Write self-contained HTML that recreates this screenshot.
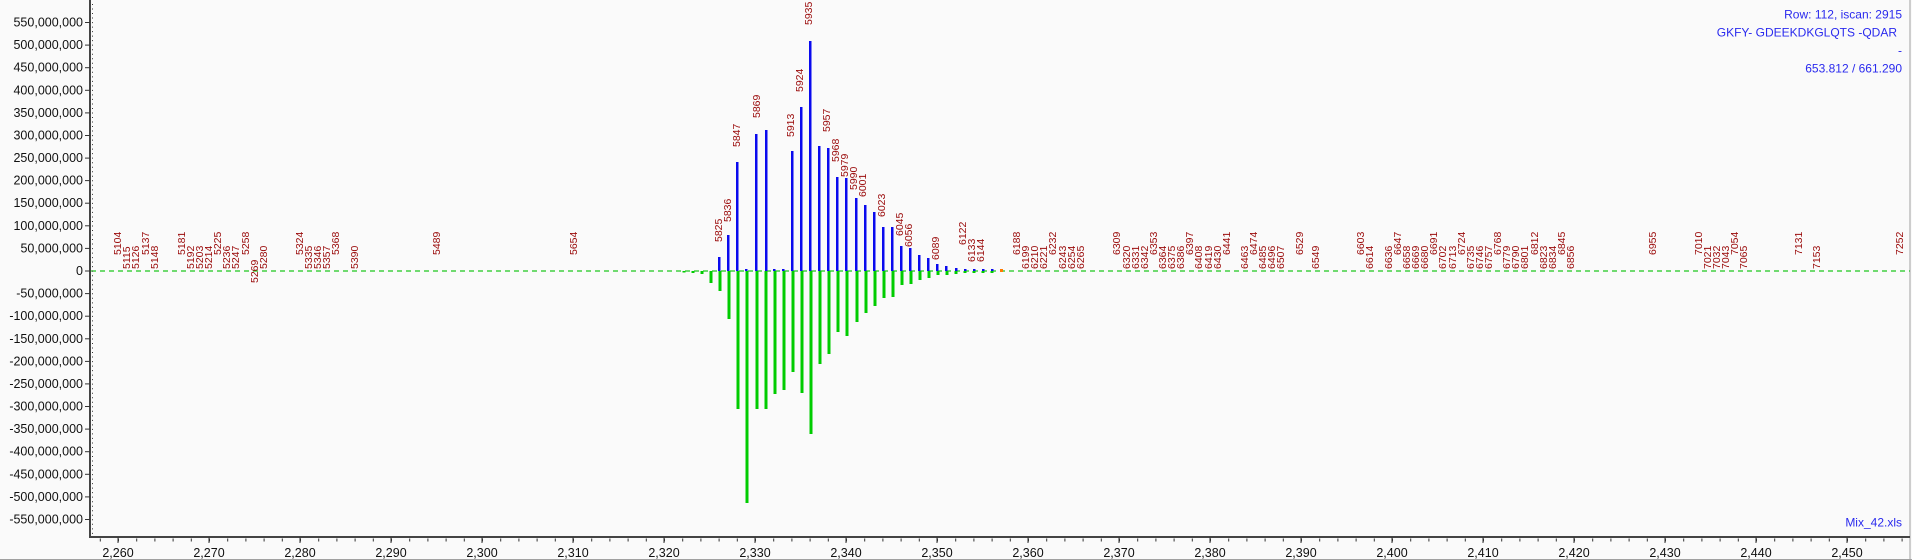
<!DOCTYPE html>
<html><head><meta charset="utf-8"><style>
html,body{margin:0;padding:0;background:#fafafa;}
svg{display:block;}
.ax{font-family:"Liberation Sans",sans-serif;font-size:12.5px;fill:#111;}
.lb{font-family:"Liberation Sans",sans-serif;font-size:10.5px;fill:#9a0a0a;}
.bl{font-family:"Liberation Sans",sans-serif;font-size:12px;fill:#2a2aee;}
</style></head><body>
<svg width="1912" height="560" xmlns="http://www.w3.org/2000/svg">
<rect width="1912" height="560" fill="#fafafa"/>
<line x1="1910" y1="0" x2="1910" y2="560" stroke="#a0a0a0" stroke-width="1"/>
<line x1="0" y1="559.5" x2="1912" y2="559.5" stroke="#a0a0a0" stroke-width="1"/>
<line x1="91" y1="271" x2="1910" y2="271" stroke="#1ec81e" stroke-width="1.2" stroke-dasharray="5,4"/>
<line x1="90" y1="0" x2="90" y2="538" stroke="#444" stroke-width="2"/>
<line x1="92.5" y1="4" x2="92.5" y2="536" stroke="#333" stroke-width="1" stroke-dasharray="1,3.52"/>
<g stroke="#333" stroke-width="1">
<line x1="85" y1="22.5" x2="90" y2="22.5"/><line x1="85" y1="45.1" x2="90" y2="45.1"/><line x1="85" y1="67.7" x2="90" y2="67.7"/><line x1="85" y1="90.3" x2="90" y2="90.3"/><line x1="85" y1="112.9" x2="90" y2="112.9"/><line x1="85" y1="135.5" x2="90" y2="135.5"/><line x1="85" y1="158.1" x2="90" y2="158.1"/><line x1="85" y1="180.6" x2="90" y2="180.6"/><line x1="85" y1="203.2" x2="90" y2="203.2"/><line x1="85" y1="225.8" x2="90" y2="225.8"/><line x1="85" y1="248.4" x2="90" y2="248.4"/><line x1="85" y1="271" x2="90" y2="271"/><line x1="85" y1="293.6" x2="90" y2="293.6"/><line x1="85" y1="316.2" x2="90" y2="316.2"/><line x1="85" y1="338.8" x2="90" y2="338.8"/><line x1="85" y1="361.4" x2="90" y2="361.4"/><line x1="85" y1="383.9" x2="90" y2="383.9"/><line x1="85" y1="406.5" x2="90" y2="406.5"/><line x1="85" y1="429.1" x2="90" y2="429.1"/><line x1="85" y1="451.7" x2="90" y2="451.7"/><line x1="85" y1="474.3" x2="90" y2="474.3"/><line x1="85" y1="496.9" x2="90" y2="496.9"/><line x1="85" y1="519.5" x2="90" y2="519.5"/>
</g>
<g class="ax" text-anchor="end">
<text x="83" y="26.5">550,000,000</text><text x="83" y="49.1">500,000,000</text><text x="83" y="71.7">450,000,000</text><text x="83" y="94.3">400,000,000</text><text x="83" y="116.9">350,000,000</text><text x="83" y="139.5">300,000,000</text><text x="83" y="162.1">250,000,000</text><text x="83" y="184.6">200,000,000</text><text x="83" y="207.2">150,000,000</text><text x="83" y="229.8">100,000,000</text><text x="83" y="252.4">50,000,000</text><text x="83" y="275">0</text><text x="83" y="297.6">-50,000,000</text><text x="83" y="320.2">-100,000,000</text><text x="83" y="342.8">-150,000,000</text><text x="83" y="365.4">-200,000,000</text><text x="83" y="387.9">-250,000,000</text><text x="83" y="410.5">-300,000,000</text><text x="83" y="433.1">-350,000,000</text><text x="83" y="455.7">-400,000,000</text><text x="83" y="478.3">-450,000,000</text><text x="83" y="500.9">-500,000,000</text><text x="83" y="523.5">-550,000,000</text>
</g>
<line x1="89" y1="537" x2="1910" y2="537" stroke="#444" stroke-width="2"/>
<line x1="99.8" y1="540" x2="1910" y2="540" stroke="#333" stroke-width="3" stroke-dasharray="1,17.2"/>
<g stroke="#333" stroke-width="1">
<line x1="118" y1="537" x2="118" y2="543"/><line x1="209" y1="537" x2="209" y2="543"/><line x1="300" y1="537" x2="300" y2="543"/><line x1="391" y1="537" x2="391" y2="543"/><line x1="482" y1="537" x2="482" y2="543"/><line x1="573" y1="537" x2="573" y2="543"/><line x1="664" y1="537" x2="664" y2="543"/><line x1="755" y1="537" x2="755" y2="543"/><line x1="846" y1="537" x2="846" y2="543"/><line x1="937" y1="537" x2="937" y2="543"/><line x1="1028" y1="537" x2="1028" y2="543"/><line x1="1119" y1="537" x2="1119" y2="543"/><line x1="1210" y1="537" x2="1210" y2="543"/><line x1="1301" y1="537" x2="1301" y2="543"/><line x1="1392" y1="537" x2="1392" y2="543"/><line x1="1483" y1="537" x2="1483" y2="543"/><line x1="1574" y1="537" x2="1574" y2="543"/><line x1="1665" y1="537" x2="1665" y2="543"/><line x1="1756" y1="537" x2="1756" y2="543"/><line x1="1847" y1="537" x2="1847" y2="543"/>
</g>
<g class="ax" text-anchor="middle">
<text x="118" y="557">2,260</text><text x="209" y="557">2,270</text><text x="300" y="557">2,280</text><text x="391" y="557">2,290</text><text x="482" y="557">2,300</text><text x="573" y="557">2,310</text><text x="664" y="557">2,320</text><text x="755" y="557">2,330</text><text x="846" y="557">2,340</text><text x="937" y="557">2,350</text><text x="1028" y="557">2,360</text><text x="1119" y="557">2,370</text><text x="1210" y="557">2,380</text><text x="1301" y="557">2,390</text><text x="1392" y="557">2,400</text><text x="1483" y="557">2,410</text><text x="1574" y="557">2,420</text><text x="1665" y="557">2,430</text><text x="1756" y="557">2,440</text><text x="1847" y="557">2,450</text>
</g>
<g fill="#00cc00">
<rect x="682.5" y="271" width="3" height="1.5"/><rect x="691.5" y="271" width="3" height="2"/><rect x="700.5" y="271" width="3" height="3"/><rect x="709.5" y="271" width="3" height="12"/><rect x="718.5" y="271" width="3" height="20"/><rect x="727.5" y="271" width="3" height="48"/><rect x="736.5" y="271" width="3" height="138"/><rect x="745.5" y="271" width="3" height="232"/><rect x="755.5" y="271" width="3" height="138"/><rect x="764.5" y="271" width="3" height="138"/><rect x="773.5" y="271" width="3" height="123"/><rect x="782.5" y="271" width="3" height="119"/><rect x="791.5" y="271" width="3" height="101"/><rect x="800.5" y="271" width="3" height="122"/><rect x="809.5" y="271" width="3" height="163"/><rect x="818.5" y="271" width="3" height="93"/><rect x="827.5" y="271" width="3" height="83"/><rect x="836.5" y="271" width="3" height="61"/><rect x="845.5" y="271" width="3" height="65"/><rect x="855.5" y="271" width="3" height="51"/><rect x="864.5" y="271" width="3" height="42"/><rect x="873.5" y="271" width="3" height="35"/><rect x="882.5" y="271" width="3" height="27"/><rect x="891.5" y="271" width="3" height="26"/><rect x="900.5" y="271" width="3" height="14"/><rect x="909.5" y="271" width="3" height="13"/><rect x="918.5" y="271" width="3" height="9"/><rect x="927.5" y="271" width="3" height="7"/><rect x="936.5" y="271" width="3" height="4"/><rect x="945.5" y="271" width="3" height="4"/><rect x="954.5" y="271" width="3" height="3"/><rect x="963.5" y="271" width="3" height="2"/><rect x="972.5" y="271" width="3" height="2"/><rect x="981.5" y="271" width="3" height="2"/><rect x="990.5" y="271" width="3" height="2"/>
</g>
<g fill="#0a0aee">
<rect x="718" y="257" width="2.5" height="14"/><rect x="727" y="235" width="2.5" height="36"/><rect x="736" y="162" width="2.5" height="109"/><rect x="745" y="269" width="2.5" height="2"/><rect x="755" y="134" width="2.5" height="137"/><rect x="765" y="130" width="2.5" height="141"/><rect x="773" y="269" width="2.5" height="2"/><rect x="782" y="269" width="2.5" height="2"/><rect x="791" y="151" width="2.5" height="120"/><rect x="800" y="107" width="2.5" height="164"/><rect x="809" y="41" width="2.5" height="230"/><rect x="818" y="146" width="2.5" height="125"/><rect x="827" y="148" width="2.5" height="123"/><rect x="836" y="177" width="2.5" height="94"/><rect x="845" y="178" width="2.5" height="93"/><rect x="855" y="198" width="2.5" height="73"/><rect x="864" y="205" width="2.5" height="66"/><rect x="873" y="212" width="2.5" height="59"/><rect x="882" y="227" width="2.5" height="44"/><rect x="891" y="227" width="2.5" height="44"/><rect x="900" y="246" width="2.5" height="25"/><rect x="909" y="248" width="2.5" height="23"/><rect x="918" y="255" width="2.5" height="16"/><rect x="927" y="258" width="2.5" height="13"/><rect x="936" y="264" width="2.5" height="7"/><rect x="945" y="266" width="2.5" height="5"/><rect x="955" y="268" width="2.5" height="3"/><rect x="964" y="269" width="2.5" height="2"/><rect x="973" y="269" width="2.5" height="2"/><rect x="982" y="269" width="2.5" height="2"/><rect x="991" y="269" width="2.5" height="2"/>
</g>
<rect x="1000" y="269" width="3" height="3" fill="#ff7a00"/>
<g class="lb">
<text transform="translate(121,255) rotate(-90)">5104</text>
<text transform="translate(130,269) rotate(-90)">5115</text>
<text transform="translate(139,269) rotate(-90)">5126</text>
<text transform="translate(149,255) rotate(-90)">5137</text>
<text transform="translate(158,269) rotate(-90)">5148</text>
<text transform="translate(185,255) rotate(-90)">5181</text>
<text transform="translate(194,269) rotate(-90)">5192</text>
<text transform="translate(203,269) rotate(-90)">5203</text>
<text transform="translate(212,269) rotate(-90)">5214</text>
<text transform="translate(221,255) rotate(-90)">5225</text>
<text transform="translate(230,269) rotate(-90)">5236</text>
<text transform="translate(239,269) rotate(-90)">5247</text>
<text transform="translate(249,255) rotate(-90)">5258</text>
<text transform="translate(258,283) rotate(-90)">5269</text>
<text transform="translate(267,269) rotate(-90)">5280</text>
<text transform="translate(303,255) rotate(-90)">5324</text>
<text transform="translate(312,269) rotate(-90)">5335</text>
<text transform="translate(321,269) rotate(-90)">5346</text>
<text transform="translate(330,269) rotate(-90)">5357</text>
<text transform="translate(339,255) rotate(-90)">5368</text>
<text transform="translate(358,269) rotate(-90)">5390</text>
<text transform="translate(440,255) rotate(-90)">5489</text>
<text transform="translate(577,255) rotate(-90)">5654</text>
<text transform="translate(722,242) rotate(-90)">5825</text>
<text transform="translate(731,222) rotate(-90)">5836</text>
<text transform="translate(740,147) rotate(-90)">5847</text>
<text transform="translate(760,118) rotate(-90)">5869</text>
<text transform="translate(794,137) rotate(-90)">5913</text>
<text transform="translate(803,92) rotate(-90)">5924</text>
<text transform="translate(812,25) rotate(-90)">5935</text>
<text transform="translate(830,132) rotate(-90)">5957</text>
<text transform="translate(839,162) rotate(-90)">5968</text>
<text transform="translate(848,177) rotate(-90)">5979</text>
<text transform="translate(857,190) rotate(-90)">5990</text>
<text transform="translate(866,197) rotate(-90)">6001</text>
<text transform="translate(885,217) rotate(-90)">6023</text>
<text transform="translate(903,236) rotate(-90)">6045</text>
<text transform="translate(912,247) rotate(-90)">6056</text>
<text transform="translate(939,260) rotate(-90)">6089</text>
<text transform="translate(966,245) rotate(-90)">6122</text>
<text transform="translate(975,262) rotate(-90)">6133</text>
<text transform="translate(984,262) rotate(-90)">6144</text>
<text transform="translate(1020,255) rotate(-90)">6188</text>
<text transform="translate(1029,269) rotate(-90)">6199</text>
<text transform="translate(1038,269) rotate(-90)">6210</text>
<text transform="translate(1047,269) rotate(-90)">6221</text>
<text transform="translate(1056,255) rotate(-90)">6232</text>
<text transform="translate(1066,269) rotate(-90)">6243</text>
<text transform="translate(1075,269) rotate(-90)">6254</text>
<text transform="translate(1084,269) rotate(-90)">6265</text>
<text transform="translate(1120,255) rotate(-90)">6309</text>
<text transform="translate(1130,269) rotate(-90)">6320</text>
<text transform="translate(1139,269) rotate(-90)">6331</text>
<text transform="translate(1148,269) rotate(-90)">6342</text>
<text transform="translate(1157,255) rotate(-90)">6353</text>
<text transform="translate(1166,269) rotate(-90)">6364</text>
<text transform="translate(1175,269) rotate(-90)">6375</text>
<text transform="translate(1184,269) rotate(-90)">6386</text>
<text transform="translate(1193,255) rotate(-90)">6397</text>
<text transform="translate(1202,269) rotate(-90)">6408</text>
<text transform="translate(1212,269) rotate(-90)">6419</text>
<text transform="translate(1221,269) rotate(-90)">6430</text>
<text transform="translate(1230,255) rotate(-90)">6441</text>
<text transform="translate(1248,269) rotate(-90)">6463</text>
<text transform="translate(1257,255) rotate(-90)">6474</text>
<text transform="translate(1266,269) rotate(-90)">6485</text>
<text transform="translate(1275,269) rotate(-90)">6496</text>
<text transform="translate(1284,269) rotate(-90)">6507</text>
<text transform="translate(1303,255) rotate(-90)">6529</text>
<text transform="translate(1319,269) rotate(-90)">6549</text>
<text transform="translate(1364,255) rotate(-90)">6603</text>
<text transform="translate(1373,269) rotate(-90)">6614</text>
<text transform="translate(1392,269) rotate(-90)">6636</text>
<text transform="translate(1401,255) rotate(-90)">6647</text>
<text transform="translate(1410,269) rotate(-90)">6658</text>
<text transform="translate(1419,269) rotate(-90)">6669</text>
<text transform="translate(1428,269) rotate(-90)">6680</text>
<text transform="translate(1437,255) rotate(-90)">6691</text>
<text transform="translate(1446,269) rotate(-90)">6702</text>
<text transform="translate(1456,269) rotate(-90)">6713</text>
<text transform="translate(1465,255) rotate(-90)">6724</text>
<text transform="translate(1474,269) rotate(-90)">6735</text>
<text transform="translate(1483,269) rotate(-90)">6746</text>
<text transform="translate(1492,269) rotate(-90)">6757</text>
<text transform="translate(1501,255) rotate(-90)">6768</text>
<text transform="translate(1510,269) rotate(-90)">6779</text>
<text transform="translate(1519,269) rotate(-90)">6790</text>
<text transform="translate(1528,269) rotate(-90)">6801</text>
<text transform="translate(1538,255) rotate(-90)">6812</text>
<text transform="translate(1547,269) rotate(-90)">6823</text>
<text transform="translate(1556,269) rotate(-90)">6834</text>
<text transform="translate(1565,255) rotate(-90)">6845</text>
<text transform="translate(1574,269) rotate(-90)">6856</text>
<text transform="translate(1656,255) rotate(-90)">6955</text>
<text transform="translate(1702,255) rotate(-90)">7010</text>
<text transform="translate(1711,269) rotate(-90)">7021</text>
<text transform="translate(1720,269) rotate(-90)">7032</text>
<text transform="translate(1729,269) rotate(-90)">7043</text>
<text transform="translate(1738,255) rotate(-90)">7054</text>
<text transform="translate(1747,269) rotate(-90)">7065</text>
<text transform="translate(1802,255) rotate(-90)">7131</text>
<text transform="translate(1820,269) rotate(-90)">7153</text>
<text transform="translate(1903,255) rotate(-90)">7252</text>
</g>
<g class="bl" text-anchor="end">
<text x="1902" y="18.5">Row: 112, iscan: 2915</text>
<text x="1897" y="36.5">GKFY- GDEEKDKGLQTS -QDAR</text>
<text x="1902" y="54.5">-</text>
<text x="1902" y="72.5">653.812 / 661.290</text>
<text x="1902" y="526.5">Mix_42.xls</text>
</g>
</svg>
</body></html>
